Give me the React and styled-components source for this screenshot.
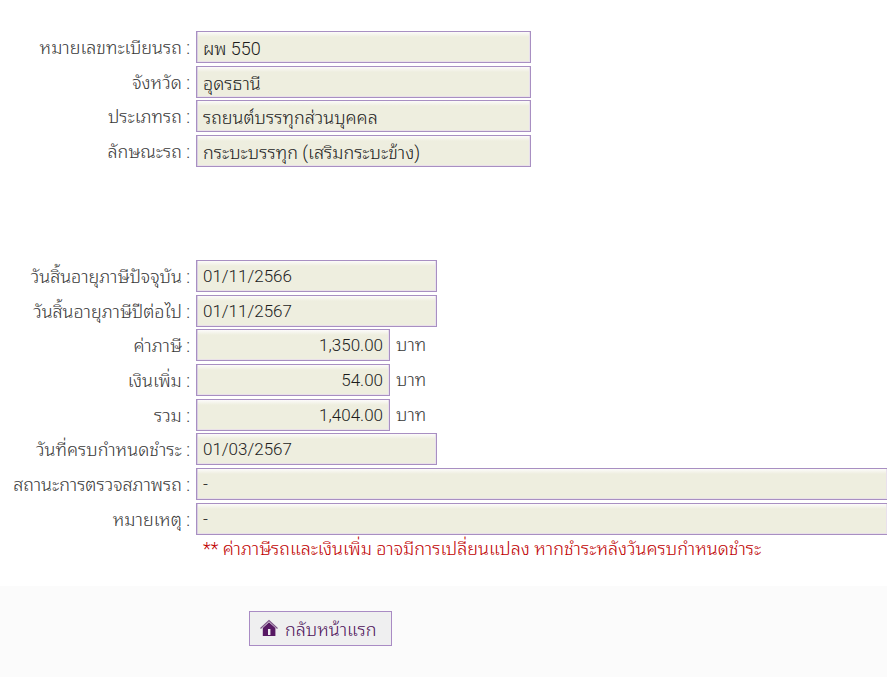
import React from "react";
import styled, { createGlobalStyle } from "styled-components";

const GlobalStyle = createGlobalStyle`
  * { box-sizing: border-box; }
  body {
    margin: 0;
    background: #fff;
    color: #383838;
    font-family: Roboto, "Droid Sans Thai", "Noto Sans Thai Looped", "Noto Looped Thai", Loma, "Noto Sans Thai", "Noto Sans", sans-serif;
    font-size: 18px;
    font-weight: 300;
    overflow-x: hidden;
  }
`;

const Form = styled.form`
  display: flex;
  flex-direction: column;
`;

const Section = styled.section`
  display: flex;
  flex-direction: column;
  gap: 2px;
  padding-top: ${(p) => p.$top}px;
`;

const Group = styled.div`
  display: flex;
  flex-direction: column;
  gap: 3px;
`;

const Row = styled.div`
  display: grid;
  grid-template-columns: 190px minmax(0, 1fr);
  column-gap: 6px;
`;

const Label = styled.label`
  height: 32px;
  padding-top: 1px;
  text-align: right;
  white-space: nowrap;
  line-height: 32px;
`;

const Cell = styled.div`
  display: flex;
  align-items: center;
  gap: 6px;
`;

const Unit = styled.span`
  line-height: 32px;
`;

const widths = { large: "335px", medium: "241px", small: "194px", full: "100%" };

const Field = styled.input`
  width: ${(p) => widths[p.$size]};
  height: 32px;
  padding: ${(p) => (p.$thai ? "0 6px" : "0 6px 1px")};
  border: 1px solid #a88fc2;
  border-right-width: ${(p) => (p.$size === "full" ? 0 : 1)}px;
  background: linear-gradient(#fcfbfa, #eeeedf 5px);
  box-shadow: inset 1px 0 #d9cfe2, inset -1px 0 #e9e1ec, inset 0 -1px #e9e1e8;
  color: #1c1c1c;
  font-family: inherit;
  font-size: ${(p) => (p.$thai ? 18 : 17)}px;
  font-weight: ${(p) => (p.$thai ? 300 : 350)};
  text-align: ${(p) => (p.$size === "small" ? "right" : "left")};
  outline: none;
`;

const Note = styled.p`
  margin: 0;
  padding-left: 203px;
  color: #c00000;
  line-height: 28px;
`;

const Footer = styled.footer`
  margin-top: 23px;
  padding: 25px 249px 31px;
  background: #fbfbfb;
`;

const HomeButton = styled.button`
  display: flex;
  align-items: center;
  gap: 7px;
  height: 35px;
  padding: 0 14px 2px 10px;
  border: 1px solid #a98bc4;
  background: #efeff0;
  color: #4d1058;
  font: inherit;
  white-space: nowrap;
`;

const HomeIcon = () => (
  <svg width="18" height="18" viewBox="0 0 18 18" aria-hidden="true">
    <path d="M0.5 9.5 9 1.5l8.5 8" fill="none" stroke="#7d5487" strokeWidth="1.2" />
    <path fillRule="evenodd" d="M9 3.2 2.8 9V17h12.6V9zM8 10h2.4v6H8z" fill="#581964" />
  </svg>
);

const vehicle = [
  [
    ["plate", "หมายเลขทะเบียนรถ :", "ผพ 550", "large"],
    ["province", "จังหวัด :", "อุดรธานี", "large"],
  ],
  [
    ["type", "ประเภทรถ :", "รถยนต์บรรทุกส่วนบุคคล", "large"],
    ["body", "ลักษณะรถ :", "กระบะบรรทุก (เสริมกระบะข้าง)", "large"],
  ],
];

const tax = [
  [
    ["expiry", "วันสิ้นอายุภาษีปัจจุบัน :", "01/11/2566", "medium"],
    ["next", "วันสิ้นอายุภาษีปีต่อไป :", "01/11/2567", "medium"],
  ],
  [
    ["tax", "ค่าภาษี :", "1,350.00", "small"],
    ["surcharge", "เงินเพิ่ม :", "54.00", "small"],
    ["total", "รวม :", "1,404.00", "small"],
  ],
  [
    ["due", "วันที่ครบกำหนดชำระ :", "01/03/2567", "medium"],
    ["inspection", "สถานะการตรวจสภาพรถ :", "-", "full"],
    ["remark", "หมายเหตุ :", "-", "full"],
  ],
];

const FieldRow = ({ id, label, value, size }) => (
  <Row>
    <Label htmlFor={id}>{label}</Label>
    <Cell>
      <Field id={id} defaultValue={value} $size={size} $thai={size === "large"} readOnly />
      {size === "small" && <Unit>บาท</Unit>}
    </Cell>
  </Row>
);

const FieldGroups = ({ groups }) =>
  groups.map((group) => (
    <Group key={group[0][0]}>
      {group.map(([id, label, value, size]) => (
        <FieldRow key={id} id={id} label={label} value={value} size={size} />
      ))}
    </Group>
  ));

export default function App() {
  return (
    <>
      <GlobalStyle />
      <Form>
        <Section $top={31}>
          <FieldGroups groups={vehicle} />
        </Section>
        <Section $top={93}>
          <FieldGroups groups={tax} />
        </Section>
        <Note>** ค่าภาษีรถและเงินเพิ่ม อาจมีการเปลี่ยนแปลง หากชำระหลังวันครบกำหนดชำระ</Note>
        <Footer>
          <HomeButton type="button">
            <HomeIcon />
            กลับหน้าแรก
          </HomeButton>
        </Footer>
      </Form>
    </>
  );
}
